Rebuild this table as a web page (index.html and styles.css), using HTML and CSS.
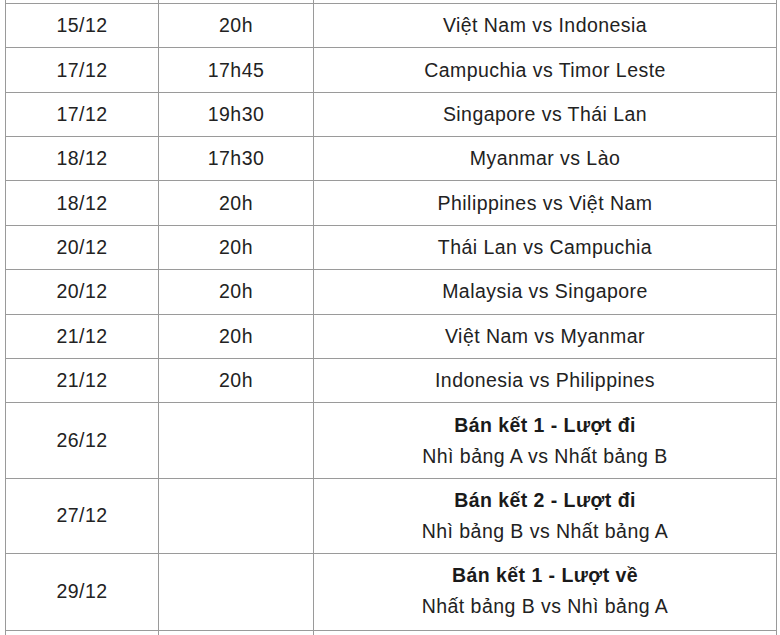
FILE: index.html
```html
<!DOCTYPE html>
<html lang="vi">
<head>
<meta charset="utf-8">
<title>Lịch thi đấu</title>
<link rel="stylesheet" href="styles.css">
</head>
<body>
<div class="wrap">
<table class="schedule">
  <colgroup>
    <col class="c-date">
    <col class="c-time">
    <col class="c-match">
  </colgroup>
  <tbody>
    <tr class="cut"><td></td><td></td><td></td></tr>
    <tr><td>15/12</td><td>20h</td><td>Việt Nam vs Indonesia</td></tr>
    <tr><td>17/12</td><td>17h45</td><td>Campuchia vs Timor Leste</td></tr>
    <tr><td>17/12</td><td>19h30</td><td>Singapore vs Thái Lan</td></tr>
    <tr><td>18/12</td><td>17h30</td><td>Myanmar vs Lào</td></tr>
    <tr><td>18/12</td><td>20h</td><td>Philippines vs Việt Nam</td></tr>
    <tr><td>20/12</td><td>20h</td><td>Thái Lan vs Campuchia</td></tr>
    <tr><td>20/12</td><td>20h</td><td>Malaysia vs Singapore</td></tr>
    <tr><td>21/12</td><td>20h</td><td>Việt Nam vs Myanmar</td></tr>
    <tr><td>21/12</td><td>20h</td><td>Indonesia vs Philippines</td></tr>
    <tr><td>26/12</td><td></td><td><strong>Bán kết 1 - Lượt đi</strong><br>Nhì bảng A vs Nhất bảng B</td></tr>
    <tr><td>27/12</td><td></td><td><strong>Bán kết 2 - Lượt đi</strong><br>Nhì bảng B vs Nhất bảng A</td></tr>
    <tr class="last"><td>29/12</td><td></td><td><strong>Bán kết 1 - Lượt về</strong><br>Nhất bảng B vs Nhì bảng A</td></tr>
    <tr class="cut"><td></td><td></td><td></td></tr>
  </tbody>
</table>
</div>
</body>
</html>
```

FILE: styles.css
```css
html, body {
  margin: 0;
  padding: 0;
  background: #ffffff;
  overflow: hidden;
}

.wrap {
  padding-left: 5px;
}

.schedule {
  border-collapse: collapse;
  width: 771px;
  margin-top: -41.4px;
  font-family: "Liberation Sans", Arial, sans-serif;
  font-size: 19.5px;
  letter-spacing: 0.45px;
  line-height: 31px;
  color: #222222;
  table-layout: fixed;
}

.c-date { width: 153px; }
.c-time { width: 155px; }
.c-match { width: 463px; }

.schedule td {
  border: 1px solid #9a9a9a;
  padding: 6.2px 8px;
  text-align: center;
  vertical-align: middle;
}

.schedule .last td {
  padding-bottom: 7.6px;
}

.schedule strong {
  font-weight: bold;
  color: #1a1a1a;
}

.cut td {
  height: 31px;
}
```
